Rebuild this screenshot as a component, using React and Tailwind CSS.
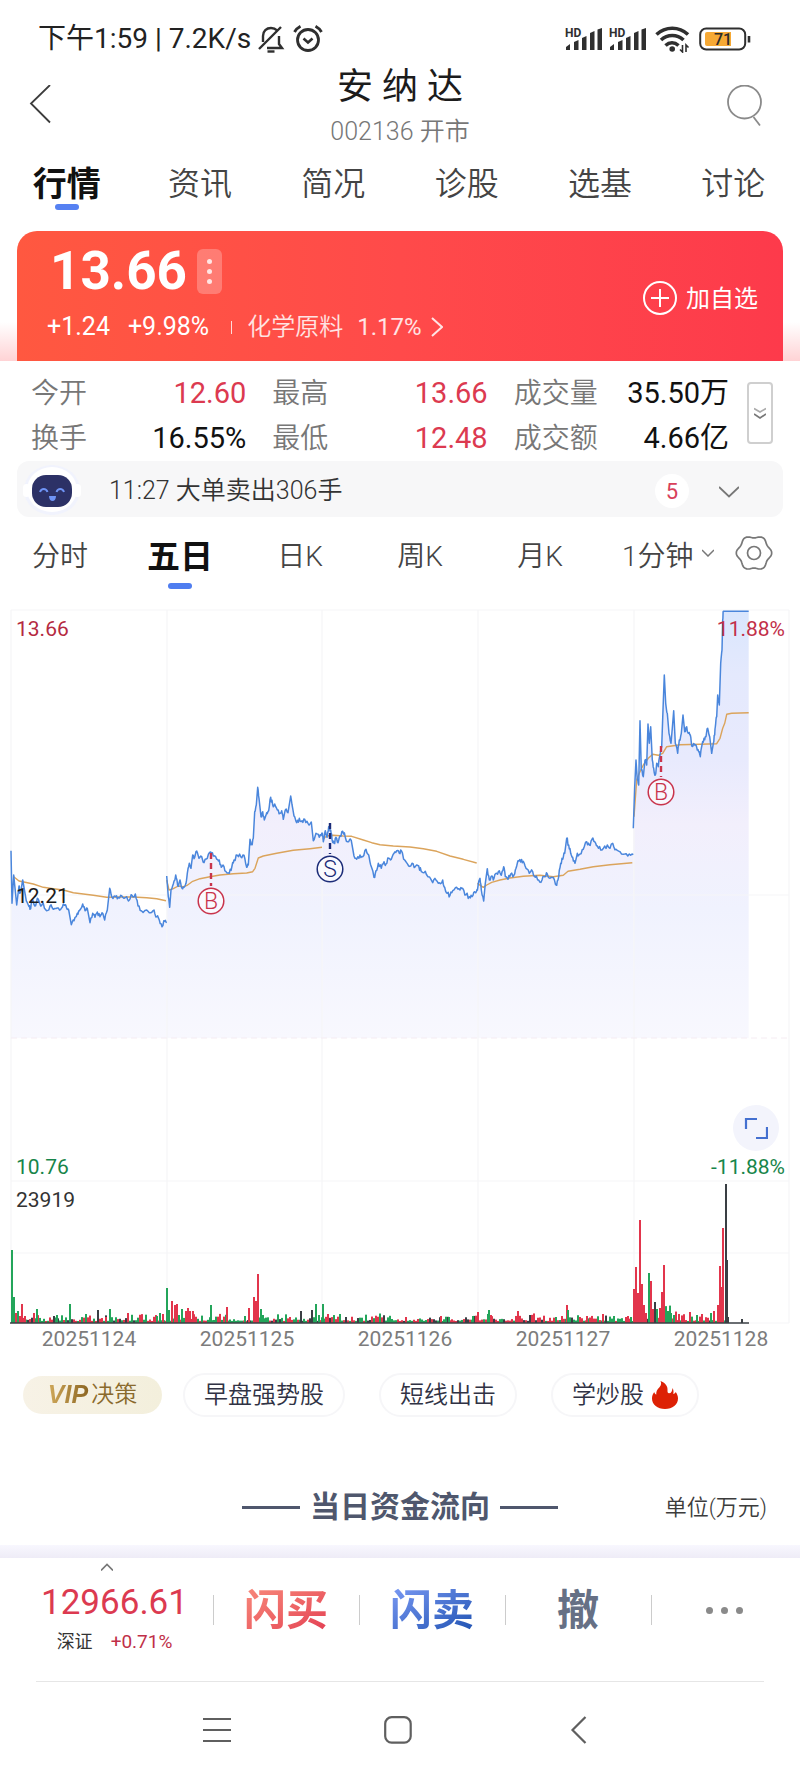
import React, { useState } from 'react';
import clsx from 'clsx';

const MAIN_TABS = ['行情', '资讯', '简况', '诊股', '选基', '讨论'];
const PERIODS = ['分时', '五日', '日K', '周K', '月K'];
const DATES = ['20251124', '20251125', '20251126', '20251127', '20251128'];

const STATS = [
  { label: '今开', value: '12.60', up: true },
  { label: '最高', value: '13.66', up: true },
  { label: '成交量', value: '35.50万' },
  { label: '换手', value: '16.55%' },
  { label: '最低', value: '12.48', up: true },
  { label: '成交额', value: '4.66亿' },
];

const RED = '#e2354c';
const GREEN = '#23a55a';
const DARK = '#3a3f44';

// Each session keeps its own origin; points are in thirds of a chart unit.
const SESSIONS = [
  {
    origin: [0, 780],
    price: [33, 212, 36, 370, 41, 285, 50, 375, 57, 318, 60, 340, 68, 300, 76, 345, 85, 375, 90, 388, 96, 360, 104, 378, 112, 355, 122, 378, 130, 370, 140, 392, 150, 378, 160, 388, 172, 384, 182, 388, 190, 372, 200, 385, 206, 390, 214, 434, 222, 422, 232, 400, 238, 392, 248, 372, 255, 392, 262, 385, 270, 428, 278, 400, 285, 412, 292, 396, 300, 410, 306, 398, 314, 420, 322, 390, 329, 325, 336, 352, 345, 348, 352, 356, 362, 346, 372, 355, 380, 350, 388, 360, 396, 346, 406, 342, 414, 378, 424, 392, 440, 390, 452, 398, 462, 390, 470, 410, 478, 420, 486, 440, 494, 424, 500, 428],
    average: [41, 290, 57, 303, 75, 307, 100, 312, 130, 322, 160, 326, 190, 330, 220, 338, 250, 342, 280, 346, 320, 352, 360, 351, 400, 351, 440, 353, 470, 356, 498, 362],
  },
  {
    origin: [0, 780],
    price: [500, 288, 505, 350, 509, 382, 513, 330, 520, 312, 527, 285, 533, 318, 540, 300, 546, 325, 552, 322, 558, 310, 562, 280, 568, 250, 573, 265, 578, 225, 584, 232, 590, 213, 597, 235, 605, 230, 612, 248, 622, 235, 632, 216, 640, 228, 650, 238, 658, 240, 664, 262, 672, 260, 680, 278, 688, 280, 696, 258, 702, 240, 712, 226, 722, 230, 732, 226, 740, 262, 745, 255, 750, 178, 755, 192, 760, 175, 764, 95, 769, 75, 773, 22, 777, 55, 783, 110, 788, 95, 793, 120, 800, 98, 806, 92, 812, 52, 818, 75, 824, 72, 832, 90, 840, 100, 845, 92, 850, 118, 856, 90, 864, 98, 872, 48, 878, 85, 884, 110, 890, 128, 898, 115, 906, 122, 914, 118, 924, 130, 934, 126, 940, 182, 948, 160, 958, 172, 966, 158],
    average: [500, 300, 507, 330, 520, 326, 535, 318, 550, 320, 562, 316, 578, 304, 600, 296, 630, 290, 660, 285, 700, 281, 740, 279, 758, 275, 765, 265, 775, 234, 790, 228, 830, 220, 880, 211, 930, 206, 966, 202],
  },
  {
    origin: [310, 800],
    price: [37, 98, 40, 125, 46, 92, 51, 112, 56, 80, 62, 90, 66, 118, 72, 130, 78, 112, 84, 128, 90, 108, 98, 94, 106, 112, 116, 125, 124, 122, 132, 168, 140, 178, 150, 165, 158, 170, 168, 148, 176, 165, 182, 195, 192, 232, 198, 212, 205, 190, 214, 205, 222, 185, 228, 192, 236, 175, 244, 178, 252, 160, 260, 152, 268, 160, 274, 152, 284, 180, 296, 198, 306, 190, 316, 200, 326, 198, 334, 215, 346, 214, 354, 230, 368, 248, 378, 240, 388, 248, 398, 240, 404, 262, 412, 280, 420, 286, 428, 272, 440, 262, 450, 270, 458, 265, 468, 284, 478, 290, 486, 290, 494, 275, 502, 268],
    average: [38, 118, 50, 108, 70, 106, 100, 108, 125, 109, 160, 120, 185, 128, 210, 134, 250, 138, 300, 141, 340, 146, 380, 154, 420, 168, 460, 178, 500, 189],
  },
  {
    origin: [310, 800],
    price: [502, 272, 506, 245, 510, 235, 514, 270, 521, 303, 526, 250, 532, 206, 538, 240, 546, 228, 552, 235, 560, 220, 568, 212, 574, 226, 581, 200, 586, 230, 594, 238, 602, 222, 612, 225, 618, 205, 624, 182, 632, 186, 640, 184, 648, 205, 658, 220, 668, 215, 676, 232, 686, 240, 696, 240, 704, 230, 712, 222, 720, 235, 730, 232, 740, 256, 746, 230, 752, 190, 758, 178, 764, 160, 770, 115, 776, 135, 782, 160, 788, 172, 795, 190, 802, 160, 810, 162, 820, 148, 830, 125, 838, 135, 846, 118, 854, 125, 862, 138, 872, 150, 884, 138, 896, 142, 908, 130, 918, 148, 930, 155, 944, 162, 958, 162, 970, 164],
    average: [502, 250, 520, 262, 530, 255, 545, 247, 570, 240, 600, 234, 640, 229, 690, 226, 730, 230, 760, 226, 774, 214, 810, 208, 850, 200, 900, 194, 967, 188],
  },
  {
    origin: [600, 600],
    price: [100, 685, 104, 560, 108, 480, 112, 540, 116, 555, 120, 362, 124, 510, 130, 530, 135, 480, 140, 495, 144, 372, 148, 430, 152, 380, 157, 480, 161, 505, 166, 525, 170, 490, 175, 500, 180, 465, 185, 440, 189, 330, 193, 225, 197, 310, 202, 340, 207, 400, 213, 430, 217, 385, 221, 332, 226, 430, 233, 460, 238, 420, 244, 400, 249, 345, 254, 395, 260, 380, 266, 400, 271, 405, 275, 438, 284, 435, 292, 450, 298, 455, 301, 470, 306, 435, 312, 415, 318, 410, 323, 385, 329, 410, 335, 460, 340, 430, 344, 405, 347, 370, 350, 350, 353, 285, 358, 315, 362, 190, 366, 150, 368, 60, 370, 34, 446, 34],
    average: [102, 650, 110, 540, 118, 520, 130, 495, 145, 475, 158, 463, 175, 466, 188, 460, 200, 440, 240, 434, 300, 433, 350, 431, 360, 415, 368, 385, 374, 370, 380, 343, 395, 340, 446, 338],
  },
];

const SPIKES = [
  [12, 73, GREEN], [14, 26, GREEN], [16, 10, RED], [18, 12, GREEN], [20, 7, RED], [22, 19, RED], [25, 7, RED], [34, 10, RED], [37, 14, GREEN],
  [54, 7, DARK], [57, 8, GREEN], [70, 19, GREEN], [86, 9, GREEN], [98, 13, DARK], [106, 6, RED], [110, 14, GREEN], [128, 10, RED],
  [157, 7, GREEN], [160, 10, GREEN], [163, 9, RED], [167, 35, GREEN], [169, 13, GREEN], [172, 22, RED], [175, 18, RED], [177, 19, RED],
  [179, 8, GREEN], [182, 14, GREEN], [186, 12, RED], [188, 15, RED], [190, 12, RED], [193, 12, RED], [211, 18, GREEN], [227, 16, RED],
  [245, 7, GREEN], [249, 15, RED], [254, 26, RED], [256, 22, RED], [258, 49, RED], [261, 14, GREEN], [263, 8, GREEN], [290, 6, RED], [301, 12, DARK],
  [312, 13, DARK], [316, 19, GREEN], [319, 8, GREEN], [323, 19, GREEN], [328, 9, RED], [340, 9, GREEN], [346, 6, DARK],
  [441, 7, RED], [449, 6, GREEN], [473, 7, GREEN], [478, 11, RED], [489, 13, GREEN], [491, 8, RED], [518, 12, RED],
  [556, 6, GREEN], [562, 7, RED], [567, 18, RED], [568, 13, GREEN], [580, 6, RED], [587, 7, RED], [603, 9, RED], [614, 7, GREEN], [628, 7, RED], [631, 6, GREEN],
  [634, 34, RED], [636, 56, RED], [638, 30, RED], [640, 103, RED], [642, 39, RED], [644, 18, RED], [646, 10, RED], [649, 50, GREEN],
  [651, 42, RED], [653, 14, RED], [655, 21, DARK], [657, 14, GREEN], [660, 15, RED], [662, 31, RED], [664, 58, RED], [666, 16, GREEN], [668, 12, GREEN],
  [671, 10, GREEN], [674, 8, GREEN], [679, 9, RED], [682, 7, RED], [690, 11, RED], [697, 8, GREEN], [702, 9, RED], [711, 10, GREEN], [714, 12, RED],
  [718, 18, RED], [720, 57, RED], [722, 36, RED], [723, 95, RED], [727, 63, DARK], [728, 6, DARK], [742, 4, DARK],
];

// small deterministic generator so the chart is the same on every render
function makeRandom(seed) {
  let s = seed;
  return () => {
    s = (s * 16807) % 2147483647;
    return s / 2147483647;
  };
}

function toPoints(flat, [ox, oy]) {
  const out = [];
  for (let i = 0; i < flat.length; i += 2) {
    out.push([ox + flat[i] / 3, oy + flat[i + 1] / 3]);
  }
  return out;
}

function addTicks(points, random) {
  const out = [points[0]];
  for (let i = 1; i < points.length; i++) {
    const [x0, y0] = points[i - 1];
    const [x1, y1] = points[i];
    if (x1 - x0 < 10 && Math.abs(y1 - y0) < 14) {
      [1 / 3, 2 / 3].forEach((t) => {
        out.push([x0 + (x1 - x0) * t, y0 + (y1 - y0) * t + (random() - 0.5) * 5]);
      });
    }
    out.push([x1, y1]);
  }
  return out;
}

const toPath = (points) => points.map(([x, y], i) => `${i ? 'L' : 'M'}${x.toFixed(1)} ${y.toFixed(1)}`).join('');

const random = makeRandom(2136);
const LINES = SESSIONS.map((s) => {
  const price = addTicks(toPoints(s.price, s.origin), random);
  const first = price[0][0];
  const last = price[price.length - 1][0];
  return {
    price: toPath(price),
    area: `${toPath(price)}L${last} 1038L${first} 1038Z`,
    average: toPath(toPoints(s.average, s.origin)),
  };
});

const SMALL_BARS = [];
for (let x = 12; x < 728; x += 2) {
  const busy = x > 634 && x < 690;
  const pick = random();
  SMALL_BARS.push([x, 2 + random() * random() * (busy ? 18 : 8), pick < 0.42 ? GREEN : pick < 0.82 ? RED : DARK]);
}

function gearPath(cx, cy) {
  const pts = [];
  for (let d = 0; d < 360; d += 5) {
    const a = (d * Math.PI) / 180;
    const r = 16.4 + 1.3 * Math.cos(6 * a);
    pts.push([cx + r * Math.cos(a), cy + r * Math.sin(a)]);
  }
  return `${toPath(pts)}Z`;
}

function Signal() {
  return (
    <svg className="w-[38px] h-6" viewBox="0 0 38 24" fill="#2f2f2f">
      <text x="0" y="10" fontSize="12" fontWeight="700" fontFamily="Roboto, sans-serif">HD</text>
      <path d="M1 23v-3l4-3v6zM9 23v-8l4.500-2v10zM17 23V11l4.500-2v14zM25 23V6l4.500-2v19zM32.500 23V2.500L37 1v22z" />
    </svg>
  );
}

function StatusBar() {
  return (
    <div className="flex items-center justify-between pt-6 pl-[38px] pr-[49px] leading-[30px] text-[#222]">
      <div className="flex items-center">
        <span className="text-[28px] whitespace-nowrap">下午1:59 | 7.2K/s</span>
        <svg className="ml-[6px] w-7 h-7" viewBox="0 0 28 28" fill="none" stroke="#2f2f2f" strokeWidth="2.400">
          <path d="M2 24 24 2M6 17v-6c0-5 3.500-8 8-8 2.500 0 4.500.8 6 2.300M22 11v8l3 4H10" />
          <path d="M10.500 26.500h7" />
        </svg>
        <svg className="ml-2 w-[30px] h-[30px]" viewBox="0 0 30 30" fill="none" stroke="#2f2f2f" strokeWidth="2.800">
          <circle cx="15" cy="16" r="10.500" />
          <path d="m10.500 14.500 4.500 4 4.500-4" strokeWidth="2.600" />
          <path d="M1.500 8c1.200-2.400 3.200-4.300 6-5.800M28.500 8c-1.200-2.400-3.200-4.300-6-5.800" />
        </svg>
      </div>
      <div className="flex items-center">
        <Signal />
        <div className="w-[6px]" />
        <Signal />
        <svg className="ml-2 w-9 h-7" viewBox="0 0 36 28" fill="none" stroke="#2f2f2f" strokeWidth="3.600">
          <path d="M1.500 9.500c9-8.300 22.500-8.300 31.500 0M6 15c6.500-6 16-6 22.500 0M10.500 20.500c4-3.600 9-3.600 13 0" />
          <circle cx="17.200" cy="24" r="2.800" fill="#2f2f2f" stroke="none" />
          <path d="M27.500 20v7l-2.500-2.500M31 27v-7l2.500 2.500" strokeWidth="1.600" />
        </svg>
        <svg className="ml-2 w-[52px] h-6" viewBox="0 0 52 24">
          <rect x="1.200" y="1.500" width="45" height="21" rx="6" fill="none" stroke="#2f2f2f" strokeWidth="2" />
          <path d="M8 5h24v14H8a2 2 0 0 1-2-2V7a2 2 0 0 1 2-2z" fill="#f6a935" />
          <path d="M50 9v6.500" stroke="#2f2f2f" strokeWidth="2.600" />
          <text x="15" y="18" fontSize="16" fontWeight="500" fontFamily="Roboto, sans-serif" fill="#2b2b2b">71</text>
        </svg>
      </div>
    </div>
  );
}

function Header() {
  return (
    <header className="flex items-center justify-between pt-[13px] px-[26px]">
      <button aria-label="返回" className="w-12 h-11">
        <svg className="w-8 h-11" viewBox="0 0 32 44" fill="none" stroke="#3c3c3c" strokeWidth="1.800">
          <path d="M24 0 5 18.500 24 37.500" />
        </svg>
      </button>
      <div className="text-center">
        <h1 className="text-[36px] leading-10 text-[#1c1c1c]">安 纳 达</h1>
        <p className="mt-[10px] text-[25px] leading-[30px] font-[350] text-[#777]">002136 开市</p>
      </div>
      <button aria-label="搜索" className="w-12 h-11">
        <svg className="w-12 h-11" viewBox="0 0 48 44" fill="none" stroke="#8a8a8a" strokeWidth="1.800">
          <circle cx="18.500" cy="17" r="16.500" />
          <path d="m27.500 32 6.500 8.500" />
        </svg>
      </button>
    </header>
  );
}

function QuoteCard() {
  return (
    <section className="mt-[21px] px-[17px] bg-[linear-gradient(to_top,#ffd3d5_0%,#ffffff_30%)]">
      <div className="flex items-center justify-between rounded-t-[20px] bg-linear-to-r from-[#ff5840] via-[#ff4a4a] to-[#fd3a4b] pt-3 pb-[18px] pl-[30px] pr-[25px] text-white">
        <div>
          <div className="flex items-center h-14">
            <span className="text-[53px] leading-[56px] font-bold pl-[3px]">13.66</span>
            <button aria-label="更多" className="ml-[10px] flex h-[45px] w-[25px] flex-col items-center justify-center gap-[5px] rounded-md bg-white/25">
              <i className="size-[5px] rounded-full bg-white/80" />
              <i className="size-[5px] rounded-full bg-white/80" />
              <i className="size-[5px] rounded-full bg-white/80" />
            </button>
          </div>
          <div className="mt-3 flex items-center text-[25px] leading-8">
            <span>+1.24</span>
            <span className="ml-[18px]">+9.98%</span>
            <i className="ml-[22px] h-[13px] w-px bg-white/80" />
            <a href="#sector" className="ml-[15px] flex items-center text-white/85">
              <span className="text-2xl font-[350]">化学原料</span>
              <span className="ml-[14px] text-2xl">1.17%</span>
              <svg className="ml-[9px] w-3 h-5" viewBox="0 0 12 20" fill="none" stroke="currentColor" strokeWidth="2">
                <path d="m1 1 10 9-10 9" />
              </svg>
            </a>
          </div>
        </div>
        <button className="mt-3 flex items-center gap-2 text-2xl leading-8">
          <svg className="size-9" viewBox="0 0 36 36" fill="none" stroke="#fff" strokeWidth="2">
            <circle cx="18" cy="17" r="16" />
            <path d="M18 8v18M9 17h18" />
          </svg>
          加自选
        </button>
      </div>
    </section>
  );
}

function Stats() {
  return (
    <section className="flex items-center pt-[10px] pl-[31px] pr-[27px]">
      <dl className="grid flex-1 grid-cols-3 gap-x-[26px] leading-[45px]">
        {STATS.map((s) => (
          <div key={s.label} className="flex justify-between whitespace-nowrap">
            <dt className="text-[28px] font-[350] text-[#777]">{s.label}</dt>
            <dd className={clsx('text-[29px]', s.up ? 'text-[#dc3a50]' : 'text-[#111]')}>{s.value}</dd>
          </div>
        ))}
      </dl>
      <button aria-label="展开" className="ml-[18px] mb-[6px] flex h-[62px] w-[26px] items-center justify-center rounded border-2 border-[#cfcfcf]">
        <svg className="w-3 h-3" viewBox="0 0 12 12" fill="none" strokeWidth="1.600">
          <path d="m0 1.500 6 3.500 6-3.500" stroke="#aaa" />
          <path d="m0 7 6 4 6-4" stroke="#777" />
        </svg>
      </button>
    </section>
  );
}

function Notice() {
  return (
    <section className="mx-[17px] flex h-14 items-center rounded-xl bg-[#f7f7f8]">
      <svg className="ml-[5px] w-[60px] h-[52px]" viewBox="0 0 60 52">
        <ellipse cx="30" cy="27" rx="28" ry="25" fill="#f1f3fd" />
        <ellipse cx="30" cy="26.500" rx="25" ry="22.500" fill="#fff" />
        <rect x="1" y="21" width="7" height="13" rx="3.500" fill="#fff" />
        <rect x="52" y="21" width="7" height="13" rx="3.500" fill="#fff" />
        <rect x="10" y="12" width="40" height="32" rx="14" fill="#2c3166" />
        <path d="M18 29c1.500-4 6-4 7.500 0M34.500 29c1.500-4 6-4 7.500 0" fill="none" stroke="#6f94f5" strokeWidth="2" />
        <path d="M27 33h7c0 3-1.500 5-3.500 5S27 36 27 33z" fill="#6f94f5" />
      </svg>
      <span className="ml-[27px] flex-1 pt-1 text-[25px] font-[350] text-[#333]">11:27 大单卖出306手</span>
      <span className="mt-1 flex size-[34px] items-center justify-center rounded-full bg-white text-[22px] text-[#d8405a]">5</span>
      <button aria-label="展开消息" className="ml-[30px] mr-11 pt-[6px]">
        <svg className="w-5 h-3" viewBox="0 0 20 12" fill="none" stroke="#777" strokeWidth="1.800">
          <path d="m0 1 10 9.500L20 1" />
        </svg>
      </button>
    </section>
  );
}

function Marker({ x, from, to, letter, color }) {
  return (
    <g>
      <path d={`M${x} ${from}V${to}`} stroke={color} strokeWidth="2.400" strokeDasharray="6 4" />
      <circle cx={x} cy={to + 15} r="12.800" fill="#fff" fillOpacity="0.6" stroke={color} strokeWidth="1.500" />
      <text x={x} y={to + 23} textAnchor="middle" fontSize="23" fontWeight="300" fill={color}>{letter}</text>
    </g>
  );
}

function Chart() {
  return (
    <div className="relative mt-[11px]">
      <svg className="block w-full h-auto font-[Roboto,sans-serif]" viewBox="0 600 800 725">
        <defs>
          <linearGradient id="area" gradientUnits="userSpaceOnUse" x1="0" y1="610" x2="0" y2="1038">
            <stop offset="0" stopColor="#d9e6fd" />
            <stop offset="0.15" stopColor="#e4e9fd" />
            <stop offset="0.35" stopColor="#e8eafd" />
            <stop offset="0.5" stopColor="#f2effc" />
            <stop offset="0.7" stopColor="#f0f2fe" />
            <stop offset="1" stopColor="#f8f8fe" />
          </linearGradient>
        </defs>
        {LINES.map((l, i) => <path key={i} d={l.area} fill="url(#area)" />)}
        <g stroke="#f5f5f7" strokeWidth="1.200">
          <path d="M11 610H789M11 895H789M11 1181H789M11 1253H789M11 1323H789" />
          <path d="M11 610V1323M167 610V1323M322 610V1323M478 610V1323M634 610V1323M789 610V1323" />
        </g>
        <path d="M11 1038H789" stroke="#f5ecf2" strokeDasharray="6 4" />
        {LINES.map((l, i) => (
          <g key={i} fill="none" strokeLinejoin="round">
            <path d={l.average} stroke="#dba45c" strokeWidth="1.400" />
            <path d={l.price} stroke="#4a86dc" strokeWidth="1.500" />
          </g>
        ))}
        <Marker x={211} from={853} to={886} letter="B" color="#c9344c" />
        <Marker x={330} from={823} to={854} letter="S" color="#1c2c78" />
        <Marker x={661} from={746} to={777} letter="B" color="#c9344c" />

        {SMALL_BARS.map(([x, h, c]) => <rect key={x} x={x - 1} y={1323 - h} width="2" height={h} fill={c} />)}
        {SPIKES.map(([x, h, c], i) => <rect key={i} x={x - 1} y={1323 - h} width="2" height={h} fill={c} />)}
        <rect x="725" y="1184" width="2" height="139" fill={DARK} />
        <path d="M10 1323H749" stroke={DARK} strokeWidth="1.500" />

        <g fontSize="21">
          <text x="16" y="636" fill="#b52a41">13.66</text>
          <text x="785" y="636" fill="#c22f49" textAnchor="end">11.88%</text>
          <text x="16" y="903" fill="#1b1b1b">12.21</text>
          <text x="16" y="1174" fill="#17854a">10.76</text>
          <text x="785" y="1174" fill="#17854a" textAnchor="end">-11.88%</text>
          <text x="16" y="1207" fill="#333">23919</text>
        </g>
      </svg>
      <button aria-label="全屏" className="absolute right-[21px] top-[505px] flex size-[46px] items-center justify-center rounded-full bg-[#f3f4fc]">
        <svg className="w-6 h-6" viewBox="0 0 24 24" fill="none" stroke="#4470d0" strokeWidth="2.200">
          <path d="M2 13V3h11M23 11v11H12" />
        </svg>
      </button>
      <div className="grid grid-cols-5 pl-[10px] text-center text-[21px] leading-7 text-[#7c7c7c]">
        {DATES.map((d) => <span key={d}>{d}</span>)}
      </div>
    </div>
  );
}

function Chips() {
  const chip = 'flex h-11 items-center rounded-full border-2 border-[#f6f6f8] text-2xl font-[350] text-[#303244] whitespace-nowrap';
  return (
    <div className="mt-5 flex items-center pl-[23px]">
      <button className="flex h-[38px] w-[139px] items-center justify-center gap-px rounded-full bg-linear-to-r from-[#f7f2e6] to-[#f3efdc] text-[23px] font-[350] text-[#8a6a2c]">
        <b className="bg-linear-to-r from-[#d0a95a] to-[#8a6420] bg-clip-text pr-[2px] font-['Liberation_Sans',sans-serif] text-[25px] italic text-transparent">VIP</b>
        决策
      </button>
      <button className={clsx(chip, 'ml-[21px] px-[19px]')}>早盘强势股</button>
      <button className={clsx(chip, 'ml-[34px] px-[19px]')}>短线出击</button>
      <button className={clsx(chip, 'ml-[34px] gap-2 px-[19px]')}>
        学炒股
        <svg className="w-[26px] h-7" viewBox="0 0 26 28">
          <path d="M8.500 0C13 1.500 16 5 15.500 9.500c-.1 1.500.3 2.800 1.500 2.800 2.300 0 3.300-2.300 3.500-5.300 1.200 2 1.200 4 .8 6 1.200-.3 1.900-1 2.400-2 1.500 2 2.300 4.300 2.300 6.500C26 23.500 20.500 28 13 28S0 23.500 0 17.500c0-2.500.8-4.800 2.300-6.500.2 1.300.9 2.200 2 2.500C4 9.500 6 8 8 5.500 9.300 3.800 9.500 1.800 8.500 0z" fill="#dd2105" />
        </svg>
      </button>
    </div>
  );
}

function TradeBar() {
  const divider = 'relative before:absolute before:left-0 before:top-4 before:h-[30px] before:w-px before:bg-[#ccc]';
  return (
    <section className="grid grid-cols-[213px_repeat(4,1fr)] items-center h-[123px] pb-[18px] pr-[3px] text-[42px] font-bold">
      <button className="flex flex-col items-center font-normal">
        <svg className="w-3 h-2" viewBox="0 0 12 8" fill="none" stroke="#777" strokeWidth="1.600">
          <path d="m0 7.500 6-6 6 6" />
        </svg>
        <span className="mt-[10px] pl-4 text-[35px] leading-[44px] text-[#dc3a50]">12966.61</span>
        <span className="flex gap-[18px] pl-4 text-lg leading-[34px] text-[#333]">
          深证<span className="text-[19px] text-[#c02f48]">+0.71%</span>
        </span>
      </button>
      <button className={divider}>
        <span className="bg-linear-to-br from-[#f88a7c] to-[#e23a52] bg-clip-text text-transparent">闪买</span>
      </button>
      <button className={divider}>
        <span className="bg-linear-to-br from-[#7c9bf5] to-[#1a50b0] bg-clip-text text-transparent">闪卖</span>
      </button>
      <button className={clsx(divider, 'text-[#667085]')}>撤</button>
      <button aria-label="更多操作" className={clsx(divider, 'flex h-16 items-center justify-center gap-2')}>
        <i className="size-[7px] rounded-full bg-[#8a8a8a]" />
        <i className="size-[7px] rounded-full bg-[#8a8a8a]" />
        <i className="size-[7px] rounded-full bg-[#8a8a8a]" />
      </button>
    </section>
  );
}

function SystemNav() {
  return (
    <nav className="grid h-24 grid-cols-3 place-items-center pl-[126px] pr-[131px]">
      <button aria-label="菜单">
        <svg className="size-7" viewBox="0 0 28 28" stroke="#5f5f5f" strokeWidth="2.200"><path d="M0 3h28M0 14h28M0 25h28" /></svg>
      </button>
      <button aria-label="主页">
        <svg className="size-7" viewBox="0 0 28 28" fill="none" stroke="#5f5f5f" strokeWidth="2.200"><rect x="1.200" y="1.200" width="25.500" height="25.500" rx="6.500" /></svg>
      </button>
      <button aria-label="后退">
        <svg className="size-7" viewBox="0 0 28 28" fill="none" stroke="#5f5f5f" strokeWidth="2.200"><path d="M20.500 1 7.500 14l13 13" /></svg>
      </button>
    </nav>
  );
}

export default function App() {
  const [tab, setTab] = useState('行情');
  const [period, setPeriod] = useState('五日');

  return (
    <div className="min-h-screen bg-white font-[Roboto,'Noto_Sans_CJK_SC',sans-serif]">
      <StatusBar />
      <Header />

      <nav className="mt-[17px] grid grid-cols-6">
        {MAIN_TABS.map((t) => (
          <button key={t} onClick={() => setTab(t)} className="flex flex-col items-center">
            <span className={clsx('leading-10', t === tab ? 'text-[34px] font-bold text-[#111]' : 'text-[32px] font-[350] text-[#444]')}>{t}</span>
            <i className={clsx('h-[6px] w-6 rounded-full', t === tab && 'bg-[#5681f2]')} />
          </button>
        ))}
      </nav>

      <QuoteCard />
      <Stats />
      <Notice />

      <div className="mt-5 flex">
        {PERIODS.map((p) => (
          <button key={p} onClick={() => setPeriod(p)} className="flex w-[15%] flex-col items-center">
            <span className={clsx('leading-10', p === period ? 'text-[33px] font-bold text-[#111]' : 'text-[28px] font-[350] text-[#444]')}>{p}</span>
            <i className={clsx('mt-[6px] h-[6px] w-6 rounded-full', p === period && 'bg-[#4f7df0]')} />
          </button>
        ))}
        <div className="flex flex-1 items-start justify-between pl-[22px] pr-[30px]">
          <button className="flex items-center text-[28px] leading-10 font-[350] text-[#444]">
            1分钟
            <svg className="ml-2 mb-2 w-3 h-2" viewBox="0 0 12 8" fill="none" stroke="#777" strokeWidth="1.500"><path d="m0 1 6 6 6-6" /></svg>
          </button>
          <button aria-label="设置">
            <svg className="size-8 overflow-visible" viewBox="2 2 32 32" fill="none" stroke="#777" strokeWidth="1.700">
              <path d={gearPath(18, 18)} />
              <circle cx="18" cy="18" r="6.500" />
            </svg>
          </button>
        </div>
      </div>

      <Chart />
      <Chips />

      <div className="mt-[70px] grid grid-cols-[1fr_auto_1fr] items-center pr-[33px] pl-[33px]">
        <span />
        <h2 className="flex items-center gap-[10px] text-[30px] leading-10 font-bold text-[#4f576d]">
          <i className="h-[3px] w-[58px] bg-[#4f576d]" />
          当日资金流向
          <i className="h-[3px] w-[58px] bg-[#4f576d]" />
        </h2>
        <span className="text-right text-[22px] text-[#3c3c3c] font-[350]">单位(万元)</span>
      </div>

      <div className="mt-[18px] h-[13px] bg-linear-to-b from-[#f8f7fe] to-[#eeecf7]" />
      <TradeBar />
      <div className="mx-9 h-px bg-[#e6e6e6]" />
      <SystemNav />
    </div>
  );
}
